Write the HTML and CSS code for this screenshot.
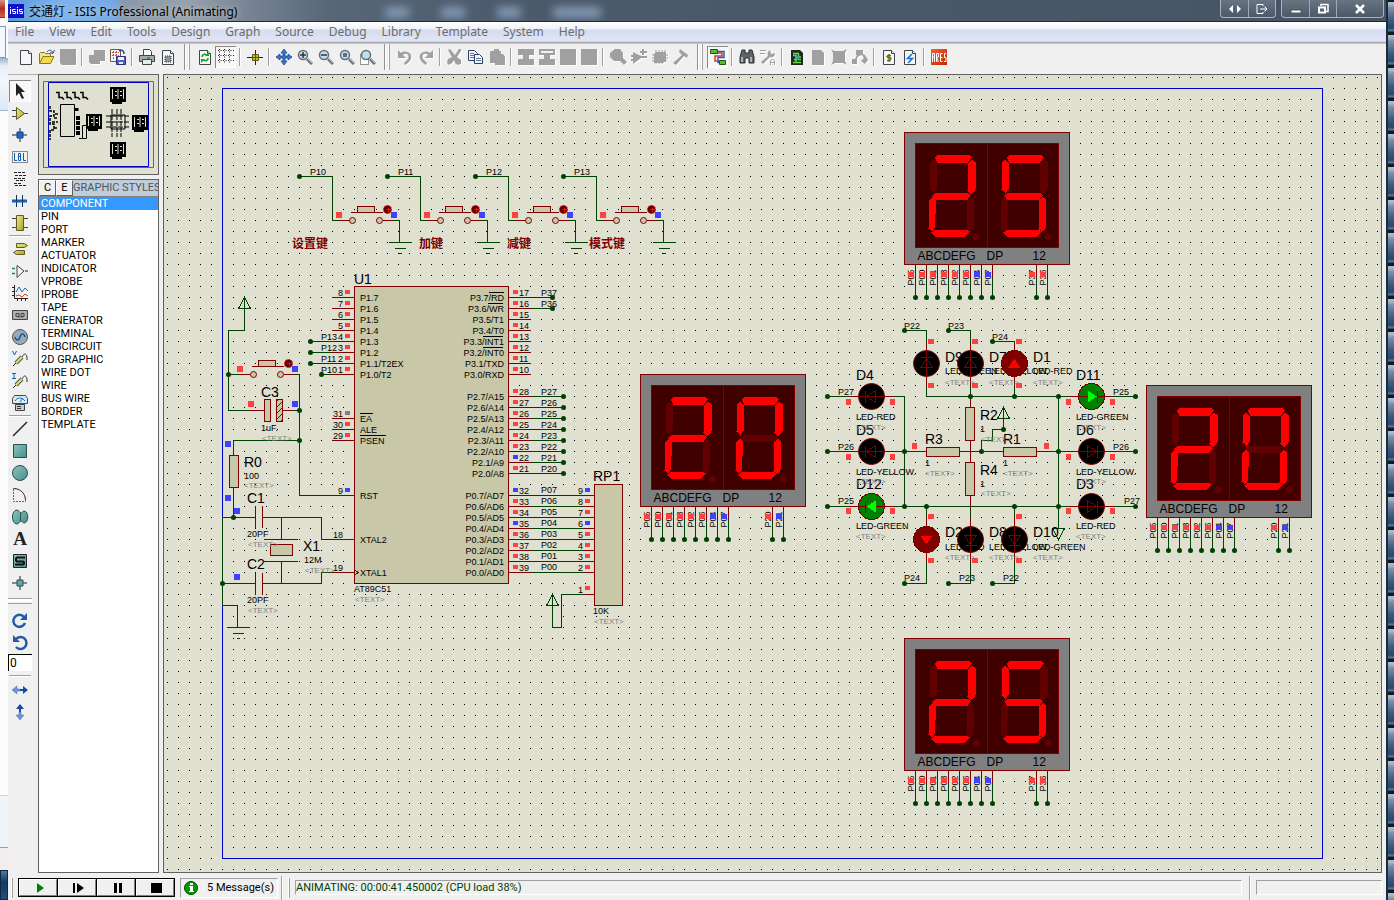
FILE: index.html
```html
<!DOCTYPE html>
<html lang="en">
<head>
<meta charset="utf-8">
<title>交通灯 - ISIS Professional (Animating)</title>
<link rel="stylesheet" href="styles.css">
</head>
<body>
<svg class="defs" width="0" height="0" aria-hidden="true">
  <defs>
    <linearGradient id="teal" x1="0" y1="0" x2="1" y2="1"><stop offset="0" stop-color="#8cc4c0"/><stop offset="1" stop-color="#488c88"/></linearGradient>
    <linearGradient id="gold" x1="0" y1="0" x2="1" y2="1"><stop offset="0" stop-color="#f0ec90"/><stop offset="1" stop-color="#a8a020"/></linearGradient>
    <linearGradient id="ares" x1="0" y1="0" x2="1" y2="1"><stop offset="0" stop-color="#f86030"/><stop offset="1" stop-color="#c02800"/></linearGradient>
    <symbol id="page" viewBox="0 0 16 16"><path d="M2.500 1.500h8l3 3v11h-11z" fill="#f4f6f8" stroke="#404448"/><path d="M10.500 1.500v3h3" fill="#fff" stroke="#404448"/></symbol>
    <symbol id="lens" viewBox="0 0 16 16"><path d="M10 10l5 5" stroke="#707478" stroke-width="3"/><path d="M10 9l5 5" stroke="#c0c4c8"/><circle cx="6" cy="6" r="4.500" fill="#c4dcec" stroke="#60707c" stroke-width="1.500"/></symbol>
    <symbol id="probe" viewBox="0 0 16 16"><path d="M1 15l4-4" stroke="#222"/><path d="M4 12l6-6" stroke="#555" stroke-width="4"/><path d="M4 12l6-6" stroke="#e8e060" stroke-width="2"/><path d="M10 6c2-4 4-4 5 0v3" fill="none" stroke="#333"/></symbol>
  </defs>
</svg>
<div class="desktop">
  <aside class="behind-left" aria-hidden="true"><i class="close-bit"></i><i class="box-bit"></i><i class="bar-bit"></i><i class="sheet-bit"></i><i class="foot-bit"></i><i class="grip-bit"></i><i class="task-bit"></i></aside>
  <main class="window">
    <header class="titlebar">
      <svg class="app-icon" width="16" height="14" viewBox="0 0 16 14"><path fill="#1010c8" d="M0 0h16v14H0z"/><path d="M2.500 5v5M7.500 5.500h-3v2h3v2h-3M9.500 5v5M14.500 5.500h-3v2h3v2h-3M2 3.500h1M9 3.500h1" fill="none" stroke="#fff"/></svg>
      <h1>交通灯 - ISIS Professional (Animating)</h1>
      <span class="ghosts" aria-hidden="true"><i></i><i></i><i></i><i class="wide"></i></span>
      <div class="caption pair">
        <button aria-label="Switch"><svg width="14" height="12" viewBox="0 0 14 12"><path d="M5 2v8L1 6zM9 2v8l4-4z" fill="#fff"/></svg></button>
        <button aria-label="Send"><svg width="14" height="12" viewBox="0 0 14 12"><path d="M8 3V1.500H2v9h6V9M5 6h7M9.500 3.500L12 6 9.500 8.500" fill="none" stroke="#fff"/></svg></button>
      </div>
      <div class="caption trio">
        <button aria-label="Minimize"><svg width="14" height="12" viewBox="0 0 14 12"><path d="M2 7h10v3H2z" fill="#fff" stroke="#555"/></svg></button>
        <button aria-label="Restore"><svg width="14" height="12" viewBox="0 0 14 12"><path d="M5 3V1.500h7v7h-2" fill="none" stroke="#fff" stroke-width="1.500"/><path d="M3 4.500h6v5H3z" fill="none" stroke="#fff" stroke-width="2"/></svg></button>
        <button class="close" aria-label="Close"><svg width="14" height="12" viewBox="0 0 14 12"><path d="M3 2l8 8M11 2l-8 8" stroke="#fff" stroke-width="2.500"/></svg></button>
      </div>
    </header>
    <nav class="menubar">
      <button>File</button><button>View</button><button>Edit</button><button>Tools</button><button>Design</button><button>Graph</button><button>Source</button><button>Debug</button><button>Library</button><button>Template</button><button>System</button><button>Help</button>
    </nav>
    <div class="toolbar" role="toolbar" aria-label="Commands">
      <button aria-label="New"><svg viewBox="0 0 16 16"><use href="#page"/></svg></button>
      <button aria-label="Open"><svg viewBox="0 0 16 16"><path d="M.5 14V4.500l1-1h4l1 1h5V8" fill="#f0e890" stroke="#907818"/><path d="M.5 14.500L4 7.500h11l-3.500 7z" fill="#f0d850" stroke="#907818"/><path d="M8 3c2-3 5-2 6 1m1.500-3L14 4.500 11 3.500" fill="none" stroke="#305880"/></svg></button>
      <button aria-label="Save" disabled><svg viewBox="0 0 16 16"><path d="M0 0h16v16H2l-2-2z"/></svg></button>
      <span class="sep"></span>
      <button aria-label="Import" disabled><svg viewBox="0 0 16 16"><path d="M5 1h11v11h-5v3H2l-2-2V6h5z"/></svg></button>
      <button aria-label="Export"><svg viewBox="0 0 16 16"><path d="M.5.5h10v12H.5z" fill="#f4f4f0" stroke="#705848"/><path d="M2 3.500h7M2 6.500h7M3.500 2v9M6.500 2v9" stroke="#c05040" stroke-dasharray="2 1"/><path d="M9 2c3-2 5 0 5 3" fill="none" stroke="#2048a0" stroke-width="1.500"/><path d="M6.500 7.500h9v8h-9z" fill="#5060c0" stroke="#283070"/><path d="M8 8h6v3H8zM9 13h4v2H9z" fill="#e8ecf8"/></svg></button>
      <span class="sep"></span>
      <button aria-label="Print"><svg viewBox="0 0 16 16"><path d="M4.500.5h6l2 2v4h-8z" fill="#fff" stroke="#444"/><path d="M.5 6.500h15v6H.5z" fill="#a0a8b0" stroke="#444"/><path d="M3.500 10.500h9v5h-9z" fill="#e8e8e8" stroke="#444"/><path d="M8 8h3v2H8z" fill="#20b030"/></svg></button>
      <button aria-label="Print area"><svg viewBox="0 0 16 16"><use href="#page"/><path d="M5 7h6v6H5z" fill="#909498" stroke="#333" stroke-dasharray="1 1"/></svg></button>
      <span class="split"></span>
      <button aria-label="Redraw"><svg viewBox="0 0 16 16"><use href="#page"/><path d="M5 8c0-3 4-4 5-1M11 9c0 3-4 4-5 1" fill="none" stroke="#20a030" stroke-width="1.500"/><path d="M8 7h4V3zM8 10H4v4z" fill="#20a030"/></svg></button>
      <button class="on" aria-label="Grid"><svg viewBox="0 0 16 16"><path d="M0 1.500h16M0 6.500h16M0 11.500h16M1.500 0v15M6.500 0v15M11.500 0v15" stroke="#222" stroke-dasharray="1 1.500"/></svg></button>
      <span class="sep"></span>
      <button aria-label="Origin"><svg viewBox="0 0 16 16"><path d="M0 8.500h16M8.500 1v15" stroke="#222"/><path d="M5.500 5.500h6v6h-6z" fill="#c8b838" stroke="#605818"/><path d="M8.500 5v7M5 8.500h7" stroke="#605818"/></svg></button>
      <span class="sep"></span>
      <button aria-label="Pan"><svg viewBox="0 0 16 16"><path d="M8 0l3 4H9v3h3V5l4 3-4 3V9H9v3h2l-3 4-3-4h2V9H4v2L0 8l4-3v2h3V4H5z" fill="#3078d0" stroke="#103c80" stroke-width=".7"/></svg></button>
      <button aria-label="Zoom in"><svg viewBox="0 0 16 16"><use href="#lens"/><path d="M3 6h6M6 3v6" stroke="#333" stroke-width="1.500"/></svg></button>
      <button aria-label="Zoom out"><svg viewBox="0 0 16 16"><use href="#lens"/><path d="M3 6h6" stroke="#333" stroke-width="1.500"/></svg></button>
      <button aria-label="Zoom all"><svg viewBox="0 0 16 16"><use href="#lens"/><path d="M4 4h4v4H4z" fill="#667078"/></svg></button>
      <button aria-label="Zoom area"><svg viewBox="0 0 16 16"><path d="M.5 5.500h8v10h-8z" fill="#fff" stroke="#333" stroke-dasharray="1 1"/><use href="#lens" width="16" height="16"/></svg></button>
      <span class="split"></span>
      <button aria-label="Undo" disabled><svg viewBox="0 0 16 16"><path d="M1 1v8h8L6 6c3-3 7 0 5 4l-4 4 1 2c8-4 8-12 2-13C7 2 5 3 4 4z"/></svg></button>
      <button aria-label="Redo" disabled><svg viewBox="0 0 16 16"><path d="M15 1v8H7l3-3C7 3 3 6 5 10l4 4-1 2C0 12 0 4 6 3c3-1 5 0 6 1z"/></svg></button>
      <span class="sep"></span>
      <button aria-label="Cut" disabled><svg viewBox="0 0 16 16"><path d="M3 0l5 6 4-6h2v2l-4 6 4 3v4l-3 1-3-2-1-3-2 3-3 2-2-2 1-4 4-2-4-7z"/></svg></button>
      <button aria-label="Copy"><svg viewBox="0 0 16 16"><path d="M.5 1.500h6l3 3v7h-9z" fill="#f0f4fc" stroke="#304060"/><path d="M6.500 5.500h5l3 3v6h-8z" fill="#f0f4fc" stroke="#304060"/><path d="M2 4.500h4M2 6.500h4M2 8.500h4M8 9.500h5M8 11.500h5" stroke="#6078a0"/></svg></button>
      <button aria-label="Paste" disabled><svg viewBox="0 0 16 16"><path d="M2 2h3V0h5v2h2v3h2l2 3v8H6v-2H1V3z"/></svg></button>
      <span class="sep"></span>
      <button aria-label="Block copy" disabled><svg viewBox="0 0 16 16"><path d="M0 0h16v6h-5v4h5v6H0v-6h5V6H0z"/></svg></button>
      <button aria-label="Block move" disabled><svg viewBox="0 0 16 16"><path d="M0 0h16v6h-5v4h5v6H0v-6h5V6H0z"/><path d="M2 2h12v2H2z" fill="#f0f0f0"/></svg></button>
      <button aria-label="Block rotate" disabled><svg viewBox="0 0 16 16"><path d="M0 0h16v16H0z"/></svg></button>
      <button aria-label="Block delete" disabled><svg viewBox="0 0 16 16"><path d="M0 0h16v16H0z"/></svg></button>
      <span class="sep"></span>
      <button aria-label="Pick parts" disabled><svg viewBox="0 0 16 16"><path d="M5 0h5l3 4v5l4 4-3 3-4-4H4L0 8V4z"/></svg></button>
      <button aria-label="Make device" disabled><svg viewBox="0 0 16 16"><path d="M2 3l8 4h6v2h-6l-8 6v-3H0v-2h2V8H0V6h2zM11 0h2v2h3v2h-3v2h-2V4H9V2h2z"/></svg></button>
      <button aria-label="Packaging" disabled><svg viewBox="0 0 16 16"><path d="M4 3h10v9l-3 2H2V5z"/><path d="M4 1v14M7 1v14M10 1v14M13 1v12M0 6h16M0 9h16M0 12h15" stroke="#a0a0a0"/></svg></button>
      <button aria-label="Decompose" disabled><svg viewBox="0 0 16 16"><path d="M7 0l8 6-1 3-3-2-8 9-3-2 9-8-3-3z"/></svg></button>
      <span class="split"></span>
      <button class="on" aria-label="Wire autorouter"><svg viewBox="0 0 16 16"><path d="M7 4h5v3H5v5h4" fill="none" stroke="#d84020" stroke-width="1.500"/><path d="M6 2.500h8v6H8v5h3" fill="none" stroke="#2060c0" stroke-width="1.500"/><path d="M.5.5h7v4h-7zM9.500 11.500h6v4h-6z" fill="#50c030" stroke="#205810"/></svg></button>
      <span class="sep"></span>
      <button aria-label="Search"><svg viewBox="0 0 16 16"><path d="M3 1h3v3h4V1h3l2 7v6h-5V9H6v5H1V8z" fill="#606468" stroke="#282c30"/><path d="M3 8v5M12 8v5" stroke="#c8ccd0" stroke-width="1.500"/></svg></button>
      <button aria-label="Property tool" disabled><svg viewBox="0 0 16 16"><path d="M10 1l1 4 4-1c0 4-3 5-5 4l-7 7-2-2 7-6c-1-3 0-5 2-6zM0 1h6v1H0zM0 4h5v1H0z"/><path d="M10.500 16v-4l2-2 2 2v4m-4-2.500h4" fill="none" stroke="#a0a0a0"/></svg></button>
      <span class="sep"></span>
      <button aria-label="Design explorer"><svg viewBox="0 0 16 16"><path d="M2 1h9l3 3v12H2z" fill="#202820"/><path d="M4 4.500h6M4 6.500h3v6M4 13.500h8M9.500 5v3H12M5 10.500h7" stroke="#60e040" stroke-width="1.500" fill="none"/><path d="M7 7h3v4H7z" fill="#40a0a0"/></svg></button>
      <button aria-label="New sheet" disabled><svg viewBox="0 0 16 16"><path d="M2 1h9l3 3v12H2z"/></svg></button>
      <button aria-label="Remove sheet" disabled><svg viewBox="0 0 16 16"><path d="M0 0l3 2h9l4-2-2 4v8l2 4-4-2H4l-4 2 2-4V4z"/></svg></button>
      <button aria-label="Zoom to child" disabled><svg viewBox="0 0 16 16"><path d="M4 1h7v4l2 1 3 5-3 4-4-3 3-3-2-3-3 1-2 2v6H0v-5h3l2-4H4z"/></svg></button>
      <span class="sep"></span>
      <button aria-label="Bill of materials"><svg viewBox="0 0 16 16"><use href="#page"/><path d="M10 6.500H7l-1 1 1 1h2l1 1-1 2H6M8 5v8" fill="none" stroke="#706810" stroke-width="1.300"/></svg></button>
      <button aria-label="Electrical rule check"><svg viewBox="0 0 16 16"><use href="#page"/><path d="M10 5L5.500 9.500h5L6 14" fill="none" stroke="#1070d0" stroke-width="1.500"/></svg></button>
      <span class="sep"></span>
      <button aria-label="ARES"><svg viewBox="0 0 16 16"><path d="M0 0h16v16H0z" fill="url(#ares)"/><path d="M1.500 13V4.500h2V13m-2-5h2M5.500 13V4.500h2V8h-2l2 5M11.500 4.500h-2v8h2m-2-4h2M15 4.500h-1.500v4H15v4h-2" fill="none" stroke="#fff"/></svg></button>
    </div>
    <div class="workspace">
      <div class="modes" role="toolbar" aria-label="Modes">
        <button class="on" aria-label="Selection"><svg viewBox="0 0 16 16"><path d="M4 0v13l3-3 3 6 2-1-3-6h4z" fill="#222"/></svg></button>
        <button aria-label="Component"><svg viewBox="0 0 16 16"><path d="M0 5.500h4M0 11.500h4M12 8.500h4" stroke="#444"/><path d="M4.500 2.500v12l8-6z" fill="url(#gold)" stroke="#605c20"/></svg></button>
        <button aria-label="Junction"><svg viewBox="0 0 16 16"><path d="M0 8h15M8 1v14" stroke="#222"/><path d="M5 5h6v6H5z" fill="#1868d0" stroke="#104080"/></svg></button>
        <button aria-label="Wire label"><svg viewBox="0 0 16 16"><path d="M.5 2.500h15v11H.5z" fill="none" stroke="#222" stroke-dasharray="1 1"/><path d="M2.500 4v7.500H5M6.500 4.500h2v7h-2zM6 7.500h3M11.500 4v7.500H14" fill="none" stroke="#1060b0"/></svg></button>
        <button aria-label="Text script"><svg viewBox="0 0 16 16"><path d="M2 1.500h11M3 4.500h11M2 7.500h12M4 9.500h9M2 12.500h7M3 14.500h11" stroke="#222" stroke-dasharray="3 1"/></svg></button>
        <button aria-label="Bus"><svg viewBox="0 0 16 16"><path d="M0 8h15" stroke="#1060c0" stroke-width="3"/><path d="M4.500 2v6M10.500 2v6M4.500 9v5M10.500 9v5" stroke="#103060"/></svg></button>
        <button aria-label="Subcircuit"><svg viewBox="0 0 16 16"><path d="M0 3.500h16M0 12.500h16" stroke="#444"/><path d="M4.500.5h7v15h-7z" fill="url(#gold)" stroke="#605c20"/></svg></button>
        <span class="rule"></span>
        <button aria-label="Terminals"><svg viewBox="0 0 16 16"><path d="M4.500 2.500h8l3 2-3 2h-8zM12.500 9.500h-8l-3 2 3 2h8z" fill="url(#gold)" stroke="#605c20"/></svg></button>
        <button aria-label="Device pins"><svg viewBox="0 0 16 16"><path d="M0 5.500h3M0 10.500h3M13 8h3" stroke="#208080" stroke-width="1.500"/><path d="M5 2.500v12L12 8z" fill="#f4f4f4" stroke="#444"/></svg></button>
        <button aria-label="Graph"><svg viewBox="0 0 16 16"><path d="M2.500 0v13.500H16M0 2.500h2M0 6.500h2M0 10.500h2M5.500 14v2M9.500 14v2M13.500 14v2" fill="none" stroke="#222"/><path d="M4 7l3-5 3 5 3-4 3 3" fill="none" stroke="#2068c0"/><path d="M4 11l3-1 3 2 3-3 3 2" fill="none" stroke="#d04020"/></svg></button>
        <button aria-label="Tape"><svg viewBox="0 0 16 16"><path d="M.5 3.500h15v9H.5z" fill="#b0b0b0" stroke="#444"/><path d="M4 6.500h3v3H4zM9 6.500h3v3H9zM7 9v2M10 9v2" fill="none" stroke="#444"/></svg></button>
        <button aria-label="Generator"><svg viewBox="0 0 16 16"><circle cx="8" cy="8" r="7.500" fill="#a0a8b0" stroke="#505860"/><path d="M3 8c1 4 4 4 5 0s4-4 5 0" fill="none" stroke="#1058b0" stroke-width="1.500"/></svg></button>
        <button aria-label="Voltage probe"><svg viewBox="0 0 16 16"><use href="#probe"/><path d="M.5 0l2 4 2-4" fill="none" stroke="#1060b0"/></svg></button>
        <button aria-label="Current probe"><svg viewBox="0 0 16 16"><use href="#probe"/><path d="M0 .5h4M0 5.500h4M2 1v4" fill="none" stroke="#1060b0"/></svg></button>
        <button aria-label="Instruments"><svg viewBox="0 0 16 16"><path d="M.5 8.500v-5l2-3h11l2 3v5z" fill="#d8ecf8" stroke="#444"/><path d="M3 6c2-4 7-4 10 0M8 7l3-4" fill="none" stroke="#2070c0"/><path d="M3.500 9.500h9v6h-9z" fill="#ccc" stroke="#444"/><path d="M5 11.500h4M5 13.500h4" stroke="#333"/></svg></button>
        <span class="rule"></span>
        <button aria-label="Line"><svg viewBox="0 0 16 16"><path d="M1 15L15 1" stroke="#222" stroke-width="1.500"/></svg></button>
        <button aria-label="Box"><svg viewBox="0 0 16 16"><path d="M1.500 1.500h13v13h-13z" fill="url(#teal)" stroke="#285050"/></svg></button>
        <button aria-label="Circle"><svg viewBox="0 0 16 16"><circle cx="8" cy="8" r="7.500" fill="url(#teal)" stroke="#285050"/></svg></button>
        <button aria-label="Arc"><svg viewBox="0 0 16 16"><path d="M1.500 2v12.500H14" fill="none" stroke="#2070d0" stroke-dasharray="2 1"/><path d="M1.500 1.500c7 0 12 5 12 12" fill="none" stroke="#222"/></svg></button>
        <button aria-label="Path"><svg viewBox="0 0 16 16"><path d="M5 1c2 0 3 3 4 3s2-2 3-2c5 0 5 12 0 12-1 0-2-2-3-2s-2 3-4 3C-1 15-1 1 5 1zM8.500 4v8" fill="url(#teal)" stroke="#285050"/></svg></button>
        <button aria-label="Text"><span class="letter">A</span></button>
        <button aria-label="Symbol"><svg viewBox="0 0 16 16"><path d="M1.500 1.500h13v13h-13z" fill="url(#teal)" stroke="#222"/><path d="M13 4.500H5l-1 1v2l1 1h6l1 1v1l-1 1H3" fill="none" stroke="#111" stroke-width="2"/></svg></button>
        <button aria-label="Marker"><svg viewBox="0 0 16 16"><path d="M0 8h15M8 1v14" stroke="#222"/><path d="M5 5h6v6H5z" fill="#60a8a0" stroke="#285050"/></svg></button>
        <span class="divide"></span>
        <button aria-label="Rotate clockwise"><svg viewBox="0 0 16 16"><path d="M12 4a6 6 0 1 0 1 6" fill="none" stroke="#2458a8" stroke-width="2.500"/><path d="M15 0v7H8z" fill="#2458a8"/></svg></button>
        <button aria-label="Rotate anticlockwise"><svg viewBox="0 0 16 16"><path d="M4 4a6 6 0 1 1 0 8" fill="none" stroke="#2458a8" stroke-width="2.500"/><path d="M1 0v7h7z" fill="#2458a8"/></svg></button>
        <input class="angle" type="text" value="0" aria-label="Rotation angle">
        <span class="rule"></span>
        <button aria-label="Mirror horizontally"><svg viewBox="0 0 16 16"><path d="M0 8l5-4v3h3v2H5v3z" fill="#7090d8" stroke="#5070b8" stroke-width=".5"/><path d="M16 8l-5-4v3H8v2h3v3z" fill="#1848a0"/></svg></button>
        <button aria-label="Mirror vertically"><svg viewBox="0 0 16 16"><path d="M8 0l4 5H9v3H7V5H4z" fill="#1848a0"/><path d="M8 16l4-5H9V8H7v3H4z" fill="#7090d8" stroke="#5070b8" stroke-width=".5"/></svg></button>
      </div>
      <div class="side">
        <svg class="overview" viewBox="39 75 119 99" role="img" aria-label="Overview">
          <path d="M43.500 81.500h110v86h-110z" fill="none" stroke="#00b000"/>
          <path d="M48.500 82.500h100v84h-100z" fill="none" stroke="#0000c0"/>
          <g fill="none" stroke="#000">
            <path d="M60.500 104.500h14v32h-14zM82.500 125.500h4v13h-4zM79 138.500h3" />
            <path d="M56 92.500h3v5h3l2 2m0-7h3v5h3l2 2m0-7h3v5h3l2 2m0-7h3v5h3l2 2" stroke-width="1.500"/>
            <path d="M50 106v5h4v5h-4v8h4v6h-4v10M55 114h3M54 118h4M52 122h6M54 128h4" stroke-width="1.500" stroke-dasharray="3 1"/>
            <path d="M78 116v20M76.500 108v3" stroke-width="4" stroke-dasharray="4 1"/>
            <path d="M106 116h24M106 122h24M106 127h24M112 109v28M117 109v28M121 109v28" stroke-dasharray="5 1"/>
            <path d="M111 115h14v14h-14z"/>
          </g>
          <g>
            <path id="mini" d="M110 87h16v15h-4v2h-10v-2h-2z"/>
            <use href="#mini" x="-24" y="27"/><use href="#mini" x="22" y="28"/><use href="#mini" y="55"/>
            <g stroke="#e0e0d0" fill="none"><path id="mini8" d="M112.500 89v10M118 89v10M123.500 89v10M115 91.500h2M120 91.500h2M115 95.500h2M120 95.500h2"/><use href="#mini8" x="-24" y="27"/><use href="#mini8" x="22" y="28"/><use href="#mini8" y="55"/></g>
          </g>
        </svg>
        <section class="picker">
          <div class="picker-head"><button>C</button><button>E</button><span>GRAPHIC STYLES</span></div>
          <ul>
            <li class="current">COMPONENT</li><li>PIN</li><li>PORT</li><li>MARKER</li><li>ACTUATOR</li><li>INDICATOR</li><li>VPROBE</li><li>IPROBE</li><li>TAPE</li><li>GENERATOR</li><li>TERMINAL</li><li>SUBCIRCUIT</li><li>2D GRAPHIC</li><li>WIRE DOT</li><li>WIRE</li><li>BUS WIRE</li><li>BORDER</li><li>TEMPLATE</li>
          </ul>
        </section>
      </div>
      <div class="sheet">
        <svg class="schematic" role="img" aria-label="Traffic light schematic">
          <defs>
            <pattern id="dots" patternUnits="userSpaceOnUse" x="167" y="77" width="11" height="11"><rect width="1" height="1" fill="#000"/></pattern>
            <pattern id="hatch" patternUnits="userSpaceOnUse" width="6" height="6"><rect width="6" height="6" fill="#c8c8a8"/><path d="M0 6l6-6" stroke="#800000"/></pattern>
            <g id="push">
              <path class="pin" d="M-14 0h11M30 0h11"/><path class="pin" d="M-2-8h32"/><rect class="part" x="5" y="-14" width="17" height="6"/>
              <circle class="part smooth" r="3"/><circle class="part smooth" cx="27" r="3"/>
              <circle class="knob smooth" cx="35" cy="-11" r="4"/><path d="M33-11h5M35.500-13v4" stroke="#f00"/>
              <rect class="hi" x="-17" y="-9" width="6" height="6"/><rect class="lo" x="38" y="-9" width="6" height="6"/>
            </g>
            <g id="gnd"><path class="wire" d="M-11 0h23M-5 6h11M-1 11h3"/></g>
            <path id="pwr" class="wire" d="M0 0l-6 11h12z"/>
            <g id="key"><use href="#node"/><path class="wire" d="M0 0h33v44h6M94 44h6v22"/><use href="#push" x="53" y="44"/><use href="#gnd" x="100" y="66"/></g>
            <circle id="node" r="2.500" class="node"/>
            <g id="led"><circle r="13" class="bulb"/><path d="M-13 0h26M-4-6v12l9-6zM6-6v12" fill="none" stroke="#800000"/></g>
            <g id="led-on"><circle r="13" fill="currentColor" stroke="#800000"/><path d="M-13 0h26M6-6v12" stroke="#800000"/><path class="glow" d="M-4-6v12l9-6z"/></g>
            <rect id="v" width="6" height="5"/>
            <rect id="h" width="5" height="6"/>
            <path id="a" d="M30 25l3-3h31l3 3-3 5H33z"/>
            <path id="b" d="M64 30l3-3 5 3-1 27-5 5-3-4z"/>
            <path id="c" d="M63 67l3-3 4 3-1 29-3 3-4-2z"/>
            <path id="d" d="M27 100l4-3h31l3 2-4 5H30z"/>
            <path id="e" d="M25 67l3-3 4 3-2 29-3 3-3-3z"/>
            <path id="f" d="M26 30l2-3 4 3v26l-3 5-4-4z"/>
            <path id="g" d="M28 63l4-3h31l3 3-3 4H30z"/>
            <g id="dim"><use href="#a"/><use href="#b"/><use href="#c"/><use href="#d"/><use href="#e"/><use href="#f"/><use href="#g"/><circle cx="72" cy="104" r="3.500"/></g>
            <g id="two"><use href="#dim" class="off"/><g class="lit"><use href="#a"/><use href="#b"/><use href="#g"/><use href="#e"/><use href="#d"/></g></g>
            <g id="five"><use href="#dim" class="off"/><g class="lit"><use href="#a"/><use href="#f"/><use href="#g"/><use href="#c"/><use href="#d"/></g></g>
            <g id="zero"><use href="#dim" class="off"/><g class="lit"><use href="#a"/><use href="#b"/><use href="#c"/><use href="#d"/><use href="#e"/><use href="#f"/></g></g>
            <g id="display">
              <rect class="case" width="165" height="132"/><rect class="glass" x="11" y="11" width="143" height="104"/><path class="pin" d="M83 11v104"/>
              <path class="pin" d="M11 132v12M22 132v12M33 132v12M44 132v12M55 132v12M66 132v12M77 132v12M88 132v12M132 132v12M143 132v12"/>
              <path class="wire" d="M11 144v21M22 144v21M33 144v21M44 144v21M55 144v21M66 144v21M77 144v21M88 144v21M132 144v21M143 144v21"/>
              <use href="#node" x="11" y="165"/><use href="#node" x="22" y="165"/><use href="#node" x="33" y="165"/><use href="#node" x="44" y="165"/><use href="#node" x="55" y="165"/><use href="#node" x="66" y="165"/><use href="#node" x="77" y="165"/><use href="#node" x="88" y="165"/><use href="#node" x="132" y="165"/><use href="#node" x="143" y="165"/>
              <g class="legend"><text x="13" y="127">ABCDEFG</text><text x="82" y="127">DP</text><text x="128" y="127">12</text></g>
              <g transform="rotate(-90)"><text x="-153" y="9">P05</text><text x="-153" y="20">P00</text><text x="-153" y="31">P01</text><text x="-153" y="42">P03</text><text x="-153" y="53">P02</text><text x="-153" y="64">P06</text><text x="-153" y="75">P04</text><text x="-153" y="86">P07</text></g>
              <g class="hi"><use href="#v" x="3" y="139"/><use href="#v" x="14" y="139"/><use href="#v" x="25" y="139"/><use href="#v" x="36" y="139"/><use href="#v" x="47" y="139"/><use href="#v" x="58" y="139"/></g>
              <g class="lo"><use href="#v" x="69" y="139"/><use href="#v" x="80" y="139"/></g>
            </g>
            <g id="ns"><use href="#display"/><use href="#two"/><use href="#five" x="72"/><g transform="rotate(-90)"><text x="-153" y="130">P37</text><text x="-153" y="141">P36</text></g><g class="hi"><use href="#v" x="124" y="139"/><use href="#v" x="135" y="139"/></g></g>
            <g id="we"><use href="#display"/><use href="#two"/><use href="#zero" x="71"/><g transform="rotate(-90)"><text x="-153" y="130">P20</text><text x="-153" y="141">P21</text></g><use href="#v" class="hi" x="124" y="139"/><use href="#v" class="lo" x="135" y="139"/></g>
          </defs>
          <rect width="100%" height="100%" fill="#e0e0d0"/>
          <g transform="translate(-164 -75)">
            <rect x="164" y="75" width="3000" height="2000" fill="url(#dots)" shape-rendering="crispEdges"/>
            <rect x="222.500" y="88.500" width="1100" height="770" fill="none" stroke="#0000c0"/>

            <g transform="translate(299.500 176.500)"><use href="#key"/><use href="#key" x="88"/><use href="#key" x="176"/><use href="#key" x="264"/></g>
            <text x="310" y="175">P10</text><text x="398" y="175">P11</text><text x="486" y="175">P12</text><text x="574" y="175">P13</text>
            <g class="cjk"><text x="292" y="248">设置键</text><text x="419" y="248">加键</text><text x="507" y="248">减键</text><text x="589" y="248">模式键</text></g>

            <use href="#pwr" x="244.500" y="297.500"/>
            <path class="wire" d="M244.500 298v32.500h-16v80H250M228.500 374.500H240M294 374.500h5.500v121H332M294 410.500h5.500M299.500 440.500h-66V446M233.500 498v19.500M222.500 517.500H236M281 517.500h40.500v22H332M222.500 583.500H236M281 583.500h40.500v-11H332M281.500 517.500V527M281.500 573v10.500M222.500 517.500v88h15v22"/>
            <path class="pin" d="M250 410.500h14M283 410.500h11M233.500 446v9M233.500 488v10M236 517.500h19.500M255.500 506v22M262.500 506v22M262.500 517.500H281M236 583.500h19.500M255.500 573v22M262.500 573v22M262.500 583.500H281M281.500 527v12.500M264 539.500h34M264 561.500h34M281.500 561.500V573"/>
            <rect class="part" x="264.500" y="399.500" width="6" height="22"/><rect x="276.500" y="399.500" width="6" height="22" fill="url(#hatch)" stroke="#800000"/>
            <rect class="part" x="229.500" y="455.500" width="9" height="32"/><rect class="part" x="270.500" y="544.500" width="22" height="11"/>
            <use href="#push" x="253.500" y="374.500"/><use href="#gnd" x="237.500" y="627.500"/>
            <use href="#node" x="228.500" y="374.500"/><use href="#node" x="299.500" y="410.500"/><use href="#node" x="299.500" y="440.500"/><use href="#node" x="233.500" y="517.500"/><use href="#node" x="222.500" y="583.500"/>
            <path class="hi" d="M248 401h6v6h-6z"/><path class="lo" d="M292 401h6v6h-6zM225 441h6v6h-6zM225 495h6v6h-6zM234 508h6v6h-6zM234 574h6v6h-6z"/>
            <g class="ref"><text x="261" y="397">C3</text><text x="244" y="467">R0</text><text x="247" y="503">C1</text><text x="247" y="569">C2</text><text x="303" y="551">X1</text></g>
            <text x="261" y="431">1uF.</text><text x="244" y="479">100</text><text x="247" y="537">20PF</text><text x="247" y="603">20PF</text><text x="304" y="563">12M</text>
            <g class="tag"><text x="262" y="441">&lt;TEXT&gt;</text><text x="244" y="488">&lt;TEXT&gt;</text><text x="248" y="547">&lt;TEXT&gt;</text><text x="248" y="613">&lt;TEXT&gt;</text><text x="305" y="573">&lt;TEXT&gt;</text></g>

            <rect class="part" x="354.500" y="286.500" width="154" height="297"/>
            <path class="pin" d="M332 297.500h22M332 308.500h22M332 319.500h22M332 330.500h22M332 341.500h22M332 352.500h22M332 363.500h22M332 374.500h22M332 418.500h22M332 429.500h22M332 440.500h22M332 495.500h22M332 539.500h22M332 572.500h22M354 569l4 3.500-4 3.500"/>
            <path class="pin" d="M509 297.500h22M509 308.500h22M509 319.500h22M509 330.500h22M509 341.500h22M509 352.500h22M509 363.500h22M509 374.500h22M509 396.500h22M509 407.500h22M509 418.500h22M509 429.500h22M509 440.500h22M509 451.500h22M509 462.500h22M509 473.500h22M509 495.500h22M509 506.500h22M509 517.500h22M509 528.500h22M509 539.500h22M509 550.500h22M509 561.500h22M509 572.500h22"/>
            <path class="pin" d="M583 495.500h11M583 506.500h11M583 517.500h11M583 528.500h11M583 539.500h11M583 550.500h11M583 561.500h11M583 572.500h11M583 594.500h11"/>
            <path class="wire" d="M310 341.500h22M310 352.500h22M310 363.500h22M321 374.500h11M531 297.500h21M531 308.500h21M531 396.500h32M531 407.500h32M531 418.500h32M531 429.500h32M531 440.500h32M531 451.500h32M531 462.500h32M531 473.500h32M531 495.500h52M531 506.500h52M531 517.500h52M531 528.500h52M531 539.500h52M531 550.500h52M531 561.500h52M531 572.500h52M583 594.500h-21.500v33h-9v-33"/>
            <use href="#pwr" x="552.500" y="594.500"/><rect class="part" x="594.500" y="484.500" width="28" height="121"/>
            <use href="#node" x="310.500" y="341.500"/><use href="#node" x="310.500" y="352.500"/><use href="#node" x="310.500" y="363.500"/><use href="#node" x="321.500" y="374.500"/><use href="#node" x="552.500" y="297.500"/><use href="#node" x="552.500" y="308.500"/>
            <use href="#node" x="563.500" y="396.500"/><use href="#node" x="563.500" y="407.500"/><use href="#node" x="563.500" y="418.500"/><use href="#node" x="563.500" y="429.500"/><use href="#node" x="563.500" y="440.500"/><use href="#node" x="563.500" y="451.500"/><use href="#node" x="563.500" y="462.500"/><use href="#node" x="563.500" y="473.500"/>
            <g class="flags"><path class="hi-line" d="M347.500 290v81M347.500 422v15M515.500 290v81M515.500 389v81M515.500 488v81M587 488v81M587 586v4"/><path class="lo-line" d="M347.500 488v4M515.500 455v4M515.500 488v4M515.500 521v4M587 488v4M587 521v4"/><path stroke="#808080" d="M347.500 411v4"/></g>
            <path d="M360 413.500h13M360 435.500h26M489 292.500h15M488 303.500h15M483 336.500h20M483 347.500h20" stroke="#000"/>
            <text><tspan x="360" y="301">P1.7</tspan><tspan x="360" dy="11">P1.6</tspan><tspan x="360" dy="11">P1.5</tspan><tspan x="360" dy="11">P1.4</tspan><tspan x="360" dy="11">P1.3</tspan><tspan x="360" dy="11">P1.2</tspan><tspan x="360" dy="11">P1.1/T2EX</tspan><tspan x="360" dy="11">P1.0/T2</tspan><tspan x="360" y="422">EA</tspan><tspan x="360" dy="11">ALE</tspan><tspan x="360" dy="11">PSEN</tspan><tspan x="360" y="499">RST</tspan><tspan x="360" y="543">XTAL2</tspan><tspan x="360" y="576">XTAL1</tspan></text>
            <text class="end"><tspan x="504" y="301">P3.7/RD</tspan><tspan x="504" dy="11">P3.6/WR</tspan><tspan x="504" dy="11">P3.5/T1</tspan><tspan x="504" dy="11">P3.4/T0</tspan><tspan x="504" dy="11">P3.3/INT1</tspan><tspan x="504" dy="11">P3.2/INT0</tspan><tspan x="504" dy="11">P3.1/TXD</tspan><tspan x="504" dy="11">P3.0/RXD</tspan><tspan x="504" y="400">P2.7/A15</tspan><tspan x="504" dy="11">P2.6/A14</tspan><tspan x="504" dy="11">P2.5/A13</tspan><tspan x="504" dy="11">P2.4/A12</tspan><tspan x="504" dy="11">P2.3/A11</tspan><tspan x="504" dy="11">P2.2/A10</tspan><tspan x="504" dy="11">P2.1/A9</tspan><tspan x="504" dy="11">P2.0/A8</tspan><tspan x="504" y="499">P0.7/AD7</tspan><tspan x="504" dy="11">P0.6/AD6</tspan><tspan x="504" dy="11">P0.5/AD5</tspan><tspan x="504" dy="11">P0.4/AD4</tspan><tspan x="504" dy="11">P0.3/AD3</tspan><tspan x="504" dy="11">P0.2/AD2</tspan><tspan x="504" dy="11">P0.1/AD1</tspan><tspan x="504" dy="11">P0.0/AD0</tspan></text>
            <text class="end"><tspan x="343" y="296">8</tspan><tspan x="343" dy="11">7</tspan><tspan x="343" dy="11">6</tspan><tspan x="343" dy="11">5</tspan><tspan x="343" dy="11">4</tspan><tspan x="343" dy="11">3</tspan><tspan x="343" dy="11">2</tspan><tspan x="343" dy="11">1</tspan><tspan x="343" y="417">31</tspan><tspan x="343" dy="11">30</tspan><tspan x="343" dy="11">29</tspan><tspan x="343" y="494">9</tspan><tspan x="343" y="538">18</tspan><tspan x="343" y="571">19</tspan></text>
            <text><tspan x="321" y="340">P13</tspan><tspan x="321" dy="11">P12</tspan><tspan x="321" dy="11">P11</tspan><tspan x="321" dy="11">P10</tspan></text>
            <text><tspan x="519" y="296">17</tspan><tspan x="519" dy="11">16</tspan><tspan x="519" dy="11">15</tspan><tspan x="519" dy="11">14</tspan><tspan x="519" dy="11">13</tspan><tspan x="519" dy="11">12</tspan><tspan x="519" dy="11">11</tspan><tspan x="519" dy="11">10</tspan><tspan x="519" y="395">28</tspan><tspan x="519" dy="11">27</tspan><tspan x="519" dy="11">26</tspan><tspan x="519" dy="11">25</tspan><tspan x="519" dy="11">24</tspan><tspan x="519" dy="11">23</tspan><tspan x="519" dy="11">22</tspan><tspan x="519" dy="11">21</tspan><tspan x="519" y="494">32</tspan><tspan x="519" dy="11">33</tspan><tspan x="519" dy="11">34</tspan><tspan x="519" dy="11">35</tspan><tspan x="519" dy="11">36</tspan><tspan x="519" dy="11">37</tspan><tspan x="519" dy="11">38</tspan><tspan x="519" dy="11">39</tspan></text>
            <text><tspan x="541" y="296">P37</tspan><tspan x="541" dy="11">P36</tspan><tspan x="541" y="395">P27</tspan><tspan x="541" dy="11">P26</tspan><tspan x="541" dy="11">P25</tspan><tspan x="541" dy="11">P24</tspan><tspan x="541" dy="11">P23</tspan><tspan x="541" dy="11">P22</tspan><tspan x="541" dy="11">P21</tspan><tspan x="541" dy="11">P20</tspan><tspan x="541" y="493">P07</tspan><tspan x="541" dy="11">P06</tspan><tspan x="541" dy="11">P05</tspan><tspan x="541" dy="11">P04</tspan><tspan x="541" dy="11">P03</tspan><tspan x="541" dy="11">P02</tspan><tspan x="541" dy="11">P01</tspan><tspan x="541" dy="11">P00</tspan></text>
            <text><tspan x="578" y="494">9</tspan><tspan x="578" dy="11">8</tspan><tspan x="578" dy="11">7</tspan><tspan x="578" dy="11">6</tspan><tspan x="578" dy="11">5</tspan><tspan x="578" dy="11">4</tspan><tspan x="578" dy="11">3</tspan><tspan x="578" dy="11">2</tspan><tspan x="578" y="593">1</tspan></text>
            <g class="ref"><text x="354" y="284">U1</text><text x="593" y="481">RP1</text></g>
            <text x="354" y="592">AT89C51</text><text x="593" y="614">10K</text>
            <g class="tag"><text x="355" y="602">&lt;TEXT&gt;</text><text x="594" y="624">&lt;TEXT&gt;</text></g>

            <use href="#ns" x="904.500" y="132.500"/><use href="#ns" x="904.500" y="638.500"/><use href="#we" x="640.500" y="374.500"/><use href="#we" x="1146.500" y="385.500"/>

            <path class="wire" d="M904.500 330.500h22v66H1069M948.500 330.500h22v66M992.500 341.500h22v55M827.500 396.500H849M893 396.500h11.500v110M827.500 451.500H849M893 451.500H915M827.500 506.500H849M893 506.500H1069M970.500 451.500H992M1047 451.500h22M1058.500 396.500v132M1113 396.500h22.500M1113 451.500h22.500M1113 506.500h22.500M981.500 451.500v-11h11v-11h11v-22M926.500 506.500v77h-22M970.500 496v87.500h-22M1014.500 506.500v77h-22M1052.500 528.500h12l-6 11z"/>
            <path class="pin" d="M926.500 343v42M970.500 343v42M1014.500 343v42M849 396.500h44M849 451.500h44M849 506.500h44M1069 396.500h44M1069 451.500h44M1069 506.500h44M970.500 396.500v11M970.500 440.500v22M970.500 495.500v11M915 451.500h11M959 451.500h11M992 451.500h11M1036 451.500h11M926.500 517v44M970.500 517v44M1014.500 517v44"/>
            <use href="#pwr" x="1003.500" y="407.500"/>
            <rect class="part" x="965.500" y="407.500" width="9" height="33"/><rect class="part" x="965.500" y="462.500" width="9" height="33"/><rect class="part" x="926.500" y="447.500" width="33" height="9"/><rect class="part" x="1003.500" y="447.500" width="33" height="9"/>
            <use href="#node" x="904.500" y="330.500"/><use href="#node" x="948.500" y="330.500"/><use href="#node" x="992.500" y="341.500"/><use href="#node" x="827.500" y="396.500"/><use href="#node" x="827.500" y="451.500"/><use href="#node" x="827.500" y="506.500"/><use href="#node" x="970.500" y="396.500"/><use href="#node" x="1014.500" y="396.500"/><use href="#node" x="1058.500" y="396.500"/><use href="#node" x="1135.500" y="396.500"/><use href="#node" x="904.500" y="451.500"/><use href="#node" x="981.500" y="451.500"/><use href="#node" x="1003.500" y="429.500"/><use href="#node" x="1058.500" y="451.500"/><use href="#node" x="1135.500" y="451.500"/><use href="#node" x="904.500" y="506.500"/><use href="#node" x="926.500" y="506.500"/><use href="#node" x="1014.500" y="506.500"/><use href="#node" x="1058.500" y="506.500"/><use href="#node" x="1135.500" y="506.500"/><use href="#node" x="904.500" y="583.500"/><use href="#node" x="948.500" y="583.500"/><use href="#node" x="992.500" y="583.500"/>
            <g class="hi"><use href="#v" x="928" y="339"/><use href="#v" x="928" y="383"/><use href="#v" x="972" y="339"/><use href="#v" x="972" y="383"/><use href="#v" x="1016" y="339"/><use href="#v" x="1016" y="383"/><use href="#v" x="928" y="514"/><use href="#v" x="928" y="558"/><use href="#v" x="972" y="558"/><use href="#v" x="1016" y="514"/><use href="#v" x="1016" y="558"/><use href="#h" x="846" y="399"/><use href="#h" x="890" y="399"/><use href="#h" x="846" y="454"/><use href="#h" x="890" y="454"/><use href="#h" x="846" y="508"/><use href="#h" x="890" y="508"/><use href="#h" x="1066" y="399"/><use href="#h" x="1110" y="399"/><use href="#h" x="1066" y="454"/><use href="#h" x="1110" y="454"/><use href="#h" x="1066" y="508"/><use href="#h" x="1110" y="508"/><use href="#h" x="912" y="443"/><use href="#h" x="1044" y="443"/></g>
            <g class="ref"><text x="945" y="362">D9</text><text x="989" y="362">D7</text><text x="1033" y="362">D1</text><text x="856" y="380">D4</text><text x="856" y="435">D5</text><text x="856" y="489">D12</text><text x="1076" y="380">D11</text><text x="1076" y="435">D6</text><text x="1076" y="489">D3</text><text x="945" y="537">D2</text><text x="989" y="537">D8</text><text x="1033" y="537">D10</text><text x="980" y="420">R2</text><text x="980" y="475">R4</text><text x="925" y="444">R3</text><text x="1003" y="444">R1</text></g>
            <text x="945" y="374">LED-GREEN</text><text x="989" y="374">LED-YELLOW</text><text x="1033" y="374">LED-RED</text><text x="856" y="420">LED-RED</text><text x="856" y="475">LED-YELLOW.</text><text x="856" y="529">LED-GREEN</text><text x="1076" y="420">LED-GREEN</text><text x="1076" y="475">LED-YELLOW.</text><text x="1076" y="529">LED-RED</text><text x="945" y="550">LED-RED</text><text x="989" y="550">LED-YELLOW</text><text x="1033" y="550">LED-GREEN</text>
            <text x="980" y="432">1</text><text x="980" y="487">1</text><text x="925" y="466">1</text><text x="1003" y="466">1</text>
            <g class="tag"><text x="945" y="385">&lt;TEXT&gt;</text><text x="989" y="385">&lt;TEXT&gt;</text><text x="1033" y="385">&lt;TEXT&gt;</text><text x="856" y="430">&lt;TEXT&gt;</text><text x="856" y="484">&lt;TEXT&gt;</text><text x="856" y="539">&lt;TEXT&gt;</text><text x="1076" y="430">&lt;TEXT&gt;</text><text x="1076" y="484">&lt;TEXT&gt;</text><text x="1076" y="539">&lt;TEXT&gt;</text><text x="945" y="560">&lt;TEXT&gt;</text><text x="989" y="560">&lt;TEXT&gt;</text><text x="1033" y="560">&lt;TEXT&gt;</text><text x="981" y="442">&lt;TEXT&gt;</text><text x="981" y="496">&lt;TEXT&gt;</text><text x="925" y="476">&lt;TEXT&gt;</text><text x="1003" y="476">&lt;TEXT&gt;</text></g>
            <text x="904" y="329">P22</text><text x="948" y="329">P23</text><text x="992" y="340">P24</text><text x="838" y="395">P27</text><text x="838" y="450">P26</text><text x="838" y="504">P25</text><text x="1113" y="395">P25</text><text x="1113" y="450">P26</text><text x="1124" y="504">P27</text><text x="904" y="581">P24</text><text x="959" y="581">P23</text><text x="1003" y="581">P22</text>
            <use href="#led" transform="translate(926.500 363.500) rotate(-90)"/><use href="#led" transform="translate(970.500 363.500) rotate(-90)"/><use href="#led-on" class="red" transform="translate(1014.500 363.500) rotate(-90)"/>
            <use href="#led" transform="translate(871.500 396.500) rotate(180)"/><use href="#led" transform="translate(871.500 451.500) rotate(180)"/><use href="#led-on" class="green" transform="translate(871.500 506.500) rotate(180)"/>
            <use href="#led-on" class="green" x="1091.500" y="396.500"/><use href="#led" x="1091.500" y="451.500"/><use href="#led" x="1091.500" y="506.500"/>
            <use href="#led-on" class="red" transform="translate(926.500 539.500) rotate(90)"/><use href="#led" transform="translate(970.500 539.500) rotate(90)"/><use href="#led" transform="translate(1014.500 539.500) rotate(90)"/>
          </g>
        </svg>
      </div>
    </div>
    <footer class="statusbar">
      <span class="grip"></span>
      <div class="transport">
        <button aria-label="Play"><svg width="40" height="15" viewBox="0 0 40 15"><path d="M17 3l7 5-7 5z" fill="#008000"/></svg></button>
        <button aria-label="Step"><svg width="40" height="15" viewBox="0 0 40 15"><path d="M14 3h2v10h-2zM18 3l7 5-7 5z"/></svg></button>
        <button aria-label="Pause"><svg width="40" height="15" viewBox="0 0 40 15"><path d="M16 3h3v10h-3zM21 3h3v10h-3z"/></svg></button>
        <button aria-label="Stop"><svg width="40" height="15" viewBox="0 0 40 15"><path d="M14 3h11v10H14z"/></svg></button>
      </div>
      <div class="field messages"><svg width="14" height="14" viewBox="0 0 14 14"><circle cx="7" cy="7" r="6.500" fill="#009800" stroke="#004800"/><path d="M6 2h3v2H6zM5 5h4v5h1v1H5v-1h1V6H5z" fill="#fff"/></svg>5 Message(s)</div>
      <span class="bar"></span><span class="grip"></span>
      <div class="field progress">ANIMATING: 00:00:41.450002 (CPU load 38%)</div>
      <span class="bar"></span>
      <div class="field coords"></div>
    </footer>
  </main>
  <aside class="behind-right" aria-hidden="true"></aside>
</div>
</body>
</html>
```

FILE: styles.css
```css
* { box-sizing: border-box; }
body { margin: 0; font-family: Roboto, "Liberation Sans", "Noto Sans CJK SC", sans-serif; font-size: 11px; }
button { margin: 0; padding: 0; border: 0; background: none; font: inherit; color: inherit; }
.defs { position: absolute; }
.desktop { display: flex; height: 100vh; min-height: 740px; overflow: hidden; background: #f0f0f0; }

.behind-left { flex: 0 0 8px; display: flex; flex-direction: column; background: #fbfbfb; }
.behind-left i { display: block; }
.close-bit { height: 18px; margin-right: 3px; background: linear-gradient(#d89080, #b03020 50%, #d06050); border-bottom: 1px solid #444; }
.box-bit { height: 32px; margin-top: 8px; margin-right: 2px; background: #f4f8fc; border: 1px solid #8098b0; border-left: 0; }
.bar-bit { height: 53px; background: linear-gradient(#9ab4d0, #e8eef8 8px, #f4f6fc 24px, #dce8f8); border-bottom: 1px solid #a0b8d0; }
.sheet-bit { flex: 1; background: #fcfcfc; }
.foot-bit { height: 53px; background: #eef3fc; border-top: 1px solid #c8d8ec; border-bottom: 1px solid #a0a0a0; }
.grip-bit { height: 22px; background: #f2eeee; }
.task-bit { height: 30px; background: linear-gradient(#507898, #143860 40%, #1c5080); border: 1px solid #102840; }
.behind-right { flex: 0 0 8px; background: repeating-linear-gradient(#101820 0 2px, #a8bccc 2px 4px, #7890a8 8px, #3c5c7c 20px, #24486c 28px, #5880a0 31px, #101820 32px 33px); border-left: 2px solid #1c2c3c; }

.window { flex: 1; min-width: 0; display: flex; flex-direction: column; background: #f0f0f0; }
.titlebar { flex: 0 0 22px; display: flex; align-items: center; position: relative; overflow: hidden; border-bottom: 1px solid #202830; color: #000; background: linear-gradient(90deg, #5a9ade, #80b2ea 60px, #74a8e4 106px, #8898a8 116px, #98a2ac 180px, #788494 240px, #586678 320px, #4c5a6c 500px, #465464); }
.titlebar h1 { margin: 0 0 0 5px; font: 12px "Noto Sans", "Noto Sans CJK SC", sans-serif; text-shadow: 0 0 6px rgba(255,255,255,.6); white-space: nowrap; }
.ghosts { flex: 1; display: flex; gap: 32px; padding: 4px 0 0 148px; filter: blur(4px); }
.ghosts i { width: 24px; height: 11px; background: #8298b2; }
.ghosts .wide { width: 48px; }
.caption { display: flex; align-self: flex-start; height: 18px; border: 1px solid #aab4c0; border-top: 0; border-radius: 0 0 4px 4px; background: linear-gradient(#687484, #4c5868); }
.caption button { width: 27px; display: grid; place-items: center; }
.caption button + button { border-left: 1px solid #a0aab6; }
.pair { margin-right: 5px; }
.trio { margin-right: 2px; }
.caption .close { width: 47px; }

.menubar { flex: 0 0 22px; display: flex; align-items: center; background: linear-gradient(#fff, #eef1f8 7px, #d5dcef 8px, #e0e5f6 19px, #c0c4d0 20px, #909090 21px, #fff 22px); color: #6c6c6c; font: 12px "Noto Sans", sans-serif; }
.menubar button { padding: 0 8px 4px 7px; }

.toolbar { flex: 0 0 30px; display: flex; align-items: center; padding: 0 0 4px 7px; }
.toolbar button, .modes button { flex: none; display: grid; place-items: center; width: 21px; height: 22px; }
.toolbar svg, .modes svg { width: 16px; height: 16px; overflow: visible; }
.toolbar button:disabled svg { fill: #a0a0a0; filter: drop-shadow(1px 1px 0 #fff); }
.on { background: #f8f8f8; box-shadow: inset 1px 1px #888, inset -1px -1px #fff; }
.sep { flex: 0 0 8px; height: 18px; background: linear-gradient(90deg, transparent 3px, #a0a0a0 3px 4px, #fff 4px 5px, transparent 5px); }
.split { flex: 0 0 16px; height: 26px; background: linear-gradient(90deg, transparent 6px, #909090 6px 7px, #fff 7px 8px, transparent 8px 10px, #fff 10px 11px, #a0a0a0 11px 12px, transparent 12px); }

.workspace { flex: 1; min-height: 0; display: flex; }
.modes { flex: 0 0 30px; padding: 5px 6px 0 0; display: flex; flex-direction: column; align-items: center; border-top: 1px solid #b0b0b0; }
.modes button { width: 22px; height: 22px; }
.rule { flex: 0 0 4px; width: 22px; background: linear-gradient(transparent 1px, #a0a0a0 1px 2px, #fff 2px 3px, transparent 3px); }
.divide { flex: 0 0 16px; align-self: stretch; background: linear-gradient(transparent 4px, #a0a0a0 4px 5px, #fff 5px 8px, transparent 8px 9px, #a0a0a0 9px 10px, transparent 10px); }
.letter { font: bold 19px/22px "Liberation Serif", serif; color: #222; }
.angle { width: 24px; height: 17px; padding: 0 1px; border: 0; border-top: 1px solid #000; border-left: 1px solid #000; font: 12px Roboto, sans-serif; }
.angle + .rule { flex-basis: 8px; background: linear-gradient(transparent 4px, #a0a0a0 4px 5px, #fff 5px 6px, transparent 6px); }

.side { flex: 0 0 121px; min-width: 0; display: flex; flex-direction: column; gap: 4px; }
.overview { flex: 0 0 101px; width: 100%; border: 1px solid #606060; background: #e0e0d0; }
.picker { flex: 1; min-height: 0; min-width: 0; display: flex; flex-direction: column; border: 1px solid #606060; background: #fff; }
.picker-head { flex: 0 0 17px; display: flex; overflow: hidden; border-bottom: 1px solid #808080; background: #bfccda; color: #555; line-height: 16px; white-space: nowrap; }
.picker-head button { flex: 0 0 17px; background: #f0f0f0; color: #000; border: 1px solid; border-color: #fff #606060 #606060 #fff; line-height: 14px; }
.picker-head span { flex: 1; min-width: 0; overflow: hidden; }
.picker ul { margin: 0; padding: 0; list-style: none; line-height: 13px; }
.picker li { padding-left: 2px; }
.current { background: #3399ff; color: #fff; }

.sheet { flex: 1; min-width: 0; margin: 0 4px 0 4px; border: 1px solid #606060; overflow: hidden; }
.schematic { display: block; width: 100%; height: 100%; font: 9px "Liberation Sans", sans-serif; shape-rendering: crispEdges; }
.schematic text { fill: #000; }
.schematic .ref text { font-size: 14px; }
.schematic .tag text { font-size: 8px; fill: #808080; }
.schematic .legend text { font-size: 12px; }
.schematic .cjk text { font: bold 12px "Noto Sans CJK SC", sans-serif; fill: #800000; }
.end { text-anchor: end; }
.wire { fill: none; stroke: #004000; }
.pin { fill: none; stroke: #800000; }
.part { fill: #c8c8a8; stroke: #800000; }
.node { fill: #004000; shape-rendering: auto; }
.smooth, .bulb { shape-rendering: auto; }
.knob { fill: #600000; stroke: #f00; stroke-dasharray: 2 1; }
.bulb { fill: #000; stroke: #800000; }
.hi { fill: #ff4040; }
.lo { fill: #4040ff; }
.flags { fill: none; stroke-width: 5; }
.hi-line { stroke: #ff4040; stroke-dasharray: 4 7; }
.lo-line { stroke: #4040ff; }
.red { color: #800000; fill: #f00; }
.green { color: #008000; fill: #0f0; }
.case { fill: #808080; stroke: #800000; }
.glass { fill: #400000; stroke: #800000; }
.off { fill: #600000; }
.lit { fill: #f00; }

.statusbar { flex: 0 0 27px; display: flex; align-items: center; padding: 2px 4px 0 0; }
.grip { flex: 0 0 10px; height: 20px; background: linear-gradient(90deg, transparent 3px, #fff 3px 4px, #a0a0a0 4px 5px, transparent 5px); }
.transport { flex: none; display: flex; padding: 1px; gap: 1px; background: #000; margin-right: 5px; }
.transport button { width: 38px; height: 17px; display: grid; place-items: center; overflow: hidden; background: #f0f0f0; border: 1px solid; border-color: #fff #808080 #808080 #fff; }
.field { height: 20px; display: flex; align-items: center; border: 1px solid; border-color: #a0a0a0 #fff #fff #a0a0a0; white-space: nowrap; overflow: hidden; }
.messages { flex: 0 0 98px; padding-left: 3px; gap: 9px; }
.bar { flex: 0 0 7px; height: 24px; background: linear-gradient(90deg, transparent 3px, #a0a0a0 3px 4px, #fff 4px 5px, transparent 5px); }
.progress { flex: 1; height: 15px; margin-right: 4px; color: #004000; }
.coords { flex: 0 0 126px; height: 15px; margin-left: 3px; }
```
